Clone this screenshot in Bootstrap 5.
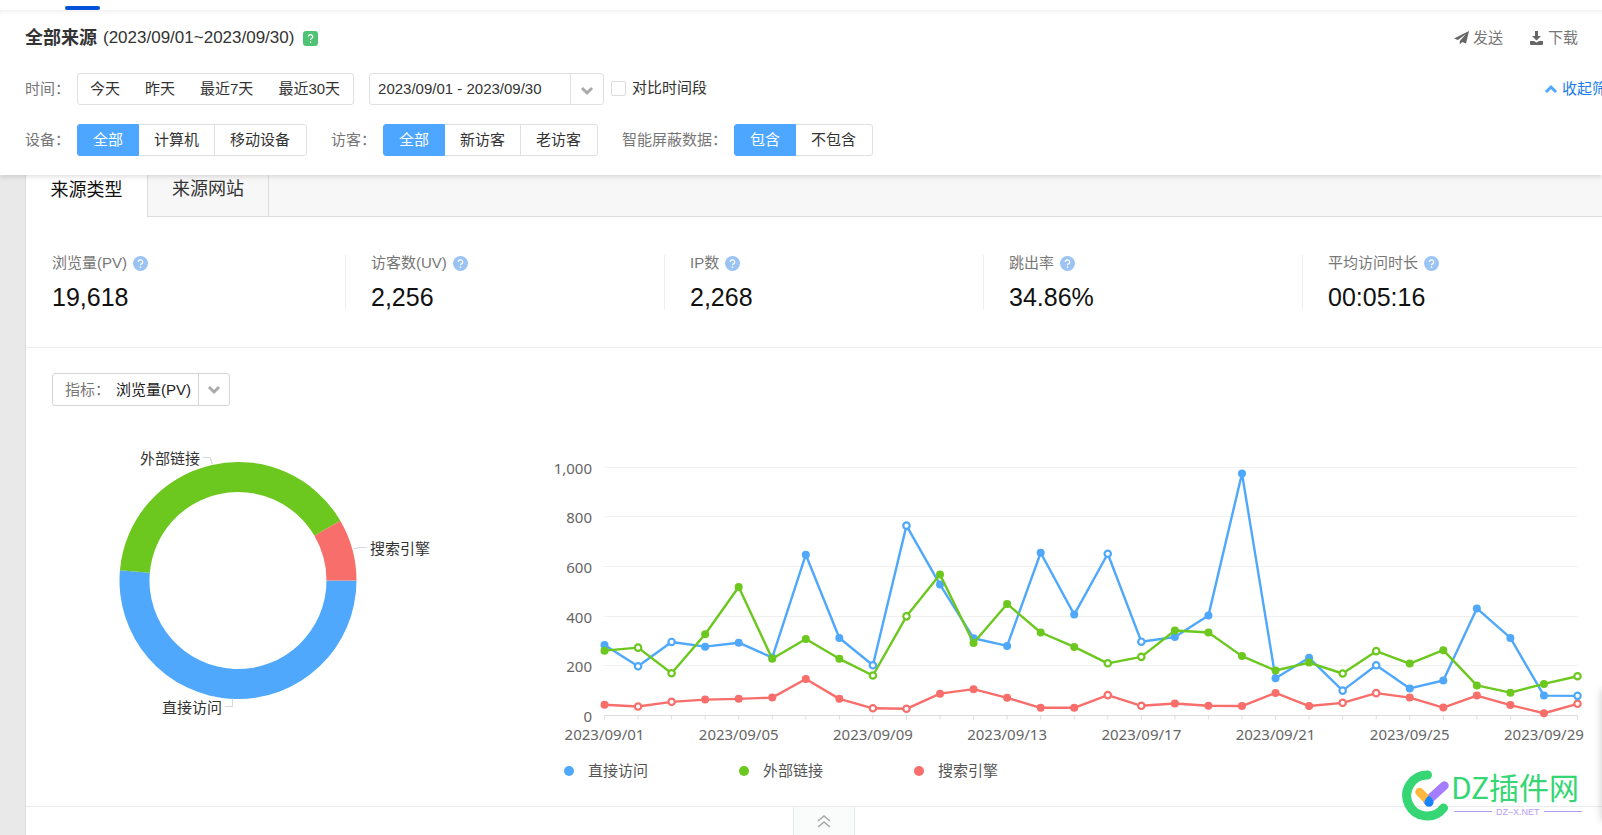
<!DOCTYPE html>
<html lang="zh-CN">
<head>
<meta charset="utf-8">
<meta name="viewport" content="width=device-width, initial-scale=1">
<title>全部来源</title>
<link href="https://cdn.jsdelivr.net/npm/bootstrap@5.3.0/dist/css/bootstrap.min.css" rel="stylesheet">
<style>
  body { font-family: "Liberation Sans", "Noto Sans CJK SC", sans-serif; font-size: 15px; line-height: 20px; color: #333; background: #e9e9e9; overflow-x: hidden; }
  .topstrip { height: 10px; padding: 6px 0 0 65px; background: #fff; }
  .topstrip span { display: block; width: 35px; height: 4px; border-radius: 2px; background: #0052d9; }
  .filters { position: relative; z-index: 2; padding: 12px 24px 19px 25px; background: #fff; white-space: nowrap; overflow-x: clip; clip-path: inset(0 0 -12px 0); box-shadow: inset 0 4px 4px -2px rgba(0,0,0,.06), 0 2px 5px rgba(0,0,0,.12); }
  .page-title { font-size: 18px; line-height: 32px; margin: 0 0 19px; }
  .title-range { font-size: 17px; margin: 0 9px 0 6px; }
  .tools { gap: 26px; margin-bottom: 20px; }
  .tool-link { color: #777; text-decoration: none; }
  .fold-link { color: #1a7cec; text-decoration: none; margin-right: -44px; }
  .field-label { color: #777; width: 52px; }
  .label-wide { width: 112px; }
  .filter-row { height: 32px; }
  .filter-row + .filter-row { margin-top: 19px; }
  .frame { height: 32px; border: 1px solid #e0e0e0; border-radius: 3px; background: #fff; }
  .quick { gap: 1px; padding-right: 1px; }
  .quick button { border: 0; background: none; padding: 0 12px; color: #333; }
  .seg .btn { --bs-btn-font-size: 15px; --bs-btn-padding-x: 15px; --bs-btn-padding-y: 0px; --bs-btn-line-height: 30px; --bs-btn-border-radius: 3px; --bs-btn-color: #333; --bs-btn-border-color: #e0e0e0; --bs-btn-active-bg: #4da6ff; --bs-btn-active-border-color: #4da6ff; --bs-btn-active-color: #fff; height: 32px; }
  .seg .btn:last-child { padding-right: 16px; }
  .date-box { width: 235px; margin-left: 15px; }
  .date-box input { border: 0; padding: 0 8px; width: 200px; color: #333; background: none; }
  .date-box button { border: 0; border-left: 1px solid #e0e0e0; background: none; width: 33px; padding: 0; }
  .compare { margin-left: 7px; height: 30px; align-self: flex-start; }
  .compare .form-check-input { width: 15px; height: 15px; margin: 0 6px 0 0; border-color: #dcdcdc; border-radius: 2px; }
  .page-wrap { padding-left: 26px; overflow-x: clip; }
  .panel { margin-right: -19px; background: #fff; box-shadow: -1px 0 0 #dcdcdc; }
  .source-tabs { height: 42px; background: #f7f7f7; }
  .source-tabs button { border: 0; background: none; font-size: 18px; line-height: 30px; width: 121px; padding: 0 0 12px; color: #333; }
  .source-tabs .current { background: #fff; color: #111; }
  .source-tabs .other { border: 1px solid #dcdcdc; border-top: 0; width: 122px; line-height: 26px; padding-bottom: 14px; }
  .source-tabs .rest { border-bottom: 1px solid #dcdcdc; }
  .stats { padding: 38px 0 37px; border-bottom: 1px solid #eee; }
  .stat { height: 55px; padding-left: 25px; border-left: 1px solid #eee; }
  .stats .col:first-child .stat { border-left-color: transparent; }
  .stat-name { color: #777; line-height: 16px; margin-bottom: 12px; gap: 6px; }
  .stat-value { font-size: 25px; line-height: 29px; color: #111; }
  .metric { height: 33px; margin: 25px 0 0 26px; border-color: #d4d4d4; }
  .metric label { padding: 0 6px 0 12px; color: #777; }
  .metric select { appearance: none; border: 0; height: 31px; width: 113px; padding: 0; color: #222; background: linear-gradient(#d4d4d4,#d4d4d4) 82px 0 / 1px 31px no-repeat, url("data:image/svg+xml,%3Csvg xmlns='http://www.w3.org/2000/svg' width='14' height='10'%3E%3Cpath d='M2 2l5 5 5-5' fill='none' stroke='%23aaa' stroke-width='3'/%3E%3C/svg%3E") 91px 11px no-repeat; }
  .share { width: 484px; height: 400px; flex: none; }
  .trend { padding-right: 19px; min-width: 0; }
  .trend svg { height: 342px; }
  .tick { font-family: "Noto Sans", "Noto Sans CJK SC", sans-serif; font-size: 15px; fill: #666; }
  .share text { font-size: 15px; fill: #333; }
  .legend-row { padding: 12px 0 0 54px; line-height: 22px; color: #555; }
  .legend-item { width: 175px; gap: 14px; }
  .legend-item i { width: 10px; height: 10px; border-radius: 50%; }
  .c-direct { background: #4fa8fb; } .c-outer { background: #6cc71e; } .c-search { background: #f76e6b; }
  .foldbar { border-top: 1px solid #ebebeb; margin-top: -2px; }
  .foldbar button { width: 62px; height: 28px; border: 1px solid #ebebeb; border-width: 0 1px; background: #fafcfc; padding: 0; }
  .brand { position: absolute; right: 18px; bottom: 14px; z-index: 3; width: 186px; height: 54px; }
  .drawer-edge { position: absolute; left: 100%; bottom: 15px; width: 40px; height: 130px; z-index: 3; box-shadow: 0 0 8px rgba(0,0,0,.22); }
  svg { display: block; }
</style>
</head>
<body>
<svg width="0" height="0" class="position-absolute" aria-hidden="true">
  <symbol id="help" viewBox="0 0 15 15"><circle cx="7.500" cy="7.500" r="7.500" fill="#9bc3f3"/><path d="M5.300 5.900a2.200 2.100 0 1 1 3.500 1.700c-.8.500-1.300.8-1.300 1.700M7.500 10.600v1.400" fill="none" stroke="#fff" stroke-width="1.300"/></symbol>
  <symbol id="down" viewBox="0 0 14 10"><path d="M2 2l5 5 5-5" fill="none" stroke="#aaa" stroke-width="3"/></symbol>
</svg>
<div class="topstrip"><span></span></div>
<header class="filters">
  <div class="d-flex justify-content-between">
    <h1 class="page-title fw-normal d-flex align-items-center"><strong>全部来源</strong><span class="title-range">(2023/09/01~2023/09/30)</span>
      <svg width="15" height="15" viewBox="0 0 15 15"><rect width="15" height="15" rx="3" fill="#4fc374"/><path d="M5.300 5.500a2.200 2 0 1 1 3.500 1.700c-.8.500-1.300.8-1.300 1.700M7.500 10.400v1.500" fill="none" stroke="#fff" stroke-width="1.300"/></svg></h1>
    <div class="tools d-flex align-items-center">
      <a href="#" class="tool-link d-flex align-items-center"><svg class="me-1" width="15" height="14" viewBox="0 0 15 14"><path d="M15 0L0 7.500l3.800 1.600L12 3 5.800 9.900v3.600l2.300-2.600 3.900 1.700z" fill="#666"/></svg>发送</a>
      <a href="#" class="tool-link d-flex align-items-center"><svg class="me-1" width="15" height="14" viewBox="0 0 15 14"><path d="M6 0h3v5h3L7.500 9.500 3 5h3zM1 10h4l2.500 1.500L10 10h4v3q0 1-1 1H2q-1 0-1-1z" fill="#666"/></svg>下载</a>
    </div>
  </div>
  <div class="d-flex align-items-center filter-row">
    <span class="field-label">时间：</span>
    <div class="frame quick d-flex" role="group" aria-label="时间">
      <button type="button">今天</button><button type="button">昨天</button><button type="button">最近7天</button><button type="button">最近30天</button>
    </div>
    <div class="frame date-box d-flex">
      <input type="text" value="2023/09/01 - 2023/09/30" aria-label="日期范围"><button type="button" aria-label="选择日期"><svg class="mx-auto mt-1" width="14" height="10"><use href="#down"/></svg></button>
    </div>
    <div class="compare d-flex align-items-center"><input class="form-check-input" type="checkbox" id="cmp"><label for="cmp">对比时间段</label></div>
    <a href="#" class="fold-link d-flex align-items-center ms-auto"><svg class="me-1" width="14" height="10" viewBox="0 0 14 10"><path d="M2 8l5-5 5 5" fill="none" stroke="#4fa8fb" stroke-width="3"/></svg>收起筛选</a>
  </div>
  <div class="d-flex align-items-center filter-row">
    <span class="field-label">设备：</span>
    <div class="btn-group seg" role="group" aria-label="设备"><button type="button" class="btn active">全部</button><button type="button" class="btn">计算机</button><button type="button" class="btn">移动设备</button></div>
    <span class="field-label ms-4">访客：</span>
    <div class="btn-group seg" role="group" aria-label="访客"><button type="button" class="btn active">全部</button><button type="button" class="btn">新访客</button><button type="button" class="btn">老访客</button></div>
    <span class="field-label label-wide ms-4">智能屏蔽数据：</span>
    <div class="btn-group seg" role="group" aria-label="智能屏蔽数据"><button type="button" class="btn active">包含</button><button type="button" class="btn">不包含</button></div>
  </div>
</header>
<main class="page-wrap position-relative">
  <div class="panel">
    <div class="source-tabs d-flex">
      <button type="button" class="current">来源类型</button><button type="button" class="other">来源网站</button><div class="rest flex-grow-1"></div>
    </div>
    <section class="stats row row-cols-5 g-0">
      <div class="col"><div class="stat"><div class="stat-name d-flex align-items-center">浏览量(PV)<svg width="15" height="15"><use href="#help"/></svg></div><div class="stat-value">19,618</div></div></div>
      <div class="col"><div class="stat"><div class="stat-name d-flex align-items-center">访客数(UV)<svg width="15" height="15"><use href="#help"/></svg></div><div class="stat-value">2,256</div></div></div>
      <div class="col"><div class="stat"><div class="stat-name d-flex align-items-center">IP数<svg width="15" height="15"><use href="#help"/></svg></div><div class="stat-value">2,268</div></div></div>
      <div class="col"><div class="stat"><div class="stat-name d-flex align-items-center">跳出率<svg width="15" height="15"><use href="#help"/></svg></div><div class="stat-value">34.86%</div></div></div>
      <div class="col"><div class="stat"><div class="stat-name d-flex align-items-center">平均访问时长<svg width="15" height="15"><use href="#help"/></svg></div><div class="stat-value">00:05:16</div></div></div>
    </section>
    <div class="frame metric d-inline-flex align-items-center align-top"><label for="metric">指标：</label><select id="metric"><option>浏览量(PV)</option><option>访客数(UV)</option></select></div>
    <section class="d-flex">
      <svg class="share" viewBox="0 0 484 400" role="img" aria-label="来源占比">
        <g id="ring"></g>
        <g fill="none" stroke="#d5d9e0" stroke-width="1.200"><path d="M177 51.500h7l2.500 7"/><path d="M326.500 143l6.500-1.500h8"/><path d="M199 300.500h7.500v-8"/></g>
        <text x="114" y="58">外部链接</text><text x="344" y="148">搜索引擎</text><text x="136" y="307">直接访问</text>
      </svg>
      <div class="trend flex-grow-1">
        <svg id="trend" class="w-100" role="img" aria-label="趋势图"></svg>
        <div class="legend-row d-flex">
          <div class="legend-item d-flex align-items-center"><i class="c-direct"></i>直接访问</div>
          <div class="legend-item d-flex align-items-center"><i class="c-outer"></i>外部链接</div>
          <div class="legend-item d-flex align-items-center"><i class="c-search"></i>搜索引擎</div>
        </div>
      </div>
    </section>
    <div class="foldbar d-flex justify-content-center mt-0"><button type="button" aria-label="收起"><svg class="mx-auto" width="16" height="14" viewBox="0 0 16 14" fill="none" stroke="#a5a9a9" stroke-width="1.600"><path d="M2 7l6-5 6 5M2 13l6-5 6 5"/></svg></button></div>
  </div>
  <svg class="brand" viewBox="0 0 186 54" role="img" aria-label="DZ插件网">
    <path d="M29.500 8A20.500 20.500 0 1 0 45.500 41" fill="none" stroke="#35d673" stroke-width="9" stroke-linecap="round"/>
    <g stroke-width="8.500" stroke-linecap="round"><path d="M29.500 34L46.500 18.500" stroke="#a47cff"/><path d="M21.500 25L31 34.500" stroke="#ffb83d"/></g>
    <path d="M31 28.500q4.500 3.500 4.500 6.700a4.500 4.500 0 0 1-9 0q0-3 4.500-6.700z" fill="#1684ff"/>
    <text x="53" y="32" font-size="30" font-family="Noto Sans CJK SC, sans-serif" fill="#35d673">DZ插件网</text>
    <path d="M56 44.500h38M146 44.500h38" stroke="#b69cf5"/><text x="98" y="48" font-size="9" font-family="Liberation Sans, sans-serif" fill="#b69cf5">DZ–X.NET</text>
  </svg>
  <div class="drawer-edge"></div>
</main>
<script src="https://cdn.jsdelivr.net/npm/bootstrap@5.3.0/dist/js/bootstrap.bundle.min.js"></script>
<script>
  const series = [
    { color: '#f76e6b', data: [43,36,55,64,67,72,147,67,29,27,88,106,71,31,31,82,39,48,39,38,91,38,51,90,72,32,80,42,9,47] },
    { color: '#4fa8fb', data: [284,198,296,277,293,233,647,312,202,764,527,311,280,655,406,651,297,316,402,974,150,232,100,202,109,141,431,312,80,79] },
    { color: '#6cc71e', data: [261,273,170,327,517,228,308,228,161,399,567,292,449,334,276,210,236,342,334,239,181,213,169,259,209,263,121,92,127,158] }
  ];
  const weekend = [1,2,8,9,15,16,22,23,29];

  function drawTrend() {
    const svg = document.getElementById('trend');
    const left = 94.5, right = svg.clientWidth - 24.5, base = 309.5, top = 61;
    const px = i => left + (right - left) * i / 29;
    const py = v => base - (base - top) * v / 1000;
    let out = '';
    for (let v = 0; v <= 1000; v += 200) {
      const y = Math.floor(py(v)) + .5;
      out += `<path d="M${left} ${y}H${right}" stroke="${v ? '#f0f0f0' : '#ddd'}"/>`;
      out += `<text class="tick" x="82" y="${y + 6}" text-anchor="end">${v.toLocaleString('en-US')}</text>`;
    }
    for (let i = 0; i < 30; i++) {
      out += `<path d="M${px(i)} ${base}v4" stroke="#ddd"/>`;
      if (i % 4 === 0) out += `<text class="tick" x="${px(i)}" y="334" text-anchor="middle">2023/09/${String(i + 1).padStart(2, '0')}</text>`;
    }
    for (const s of series) {
      out += `<polyline fill="none" stroke="${s.color}" stroke-width="2.4" stroke-linejoin="round" points="${s.data.map((v, i) => px(i) + ',' + py(v)).join(' ')}"/>`;
      s.data.forEach((v, i) => {
        out += weekend.includes(i)
          ? `<circle cx="${px(i)}" cy="${py(v)}" r="3.2" fill="#fff" stroke="${s.color}" stroke-width="2.2"/>`
          : `<circle cx="${px(i)}" cy="${py(v)}" r="4" fill="${s.color}"/>`;
      });
    }
    svg.innerHTML = out;
  }

  function drawRing() {
    const cx = 212, cy = 174.5, R = 118.5, r = 88.5;
    const p = (rad, a) => (cx + rad * Math.cos(a * Math.PI / 180)) + ' ' + (cy + rad * Math.sin(a * Math.PI / 180));
    const parts = [[0, 185, '#4fa8fb'], [185, 329.7, '#6cc71e'], [329.7, 360, '#f76e6b']];
    document.getElementById('ring').innerHTML = parts.map(([a, b, c]) => {
      const big = b - a > 180 ? 1 : 0;
      return `<path fill="${c}" d="M${p(R, a)}A${R} ${R} 0 ${big} 1 ${p(R, b)}L${p(r, b)}A${r} ${r} 0 ${big} 0 ${p(r, a)}Z"/>`;
    }).join('');
  }
  drawRing();
  drawTrend();
  addEventListener('resize', drawTrend);
</script>
</body>
</html>
